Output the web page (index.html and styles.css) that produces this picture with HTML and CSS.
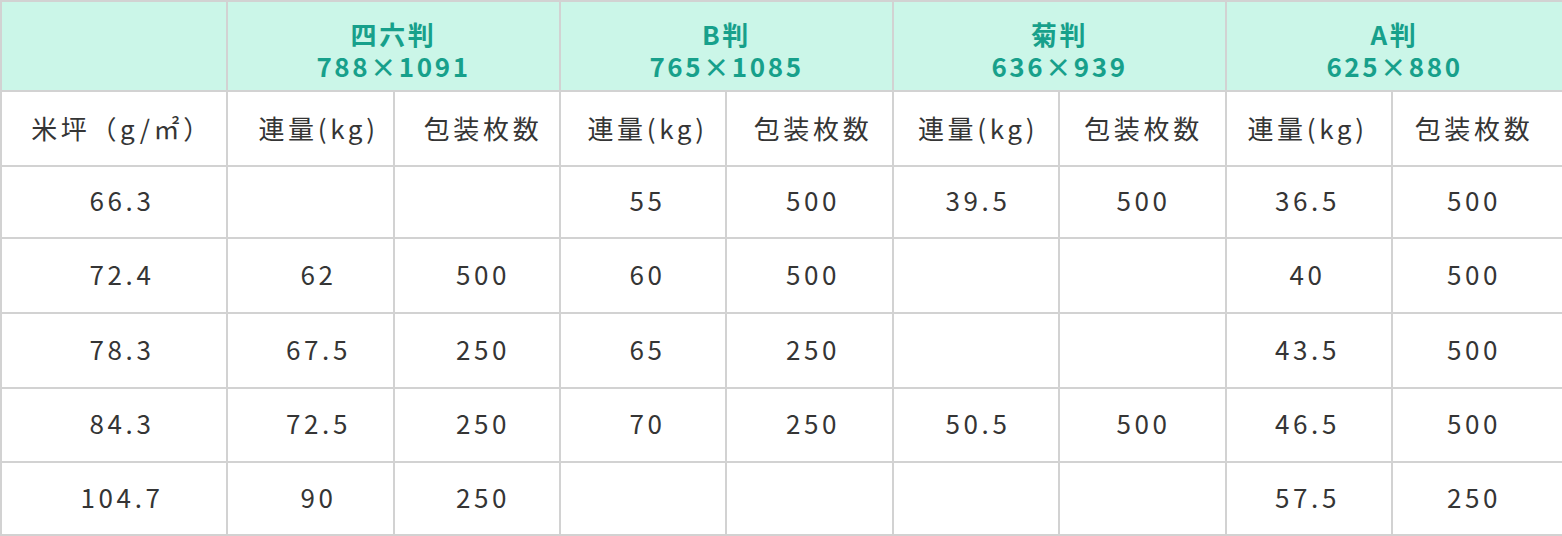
FILE: index.html
```html
<!DOCTYPE html>
<html lang="ja">
<head>
<meta charset="utf-8">
<link rel="stylesheet" href="styles.css">
</head>
<body>
<table class="paper">
  <colgroup>
    <col class="c-first">
    <col class="c-a">
    <col class="c-b">
    <col class="c-b">
    <col class="c-a">
    <col class="c-b">
    <col class="c-a">
    <col class="c-b">
    <col class="c-last">
  </colgroup>
  <thead>
    <tr class="row-head">
      <th></th>
      <th colspan="2">四六判<br>788×1091</th>
      <th colspan="2">B判<br>765×1085</th>
      <th colspan="2">菊判<br>636×939</th>
      <th colspan="2">A判<br>625×880</th>
    </tr>
    <tr class="row-sub">
      <td>米坪（g/㎡）</td>
      <td>連量(kg)</td><td>包装枚数</td>
      <td>連量(kg)</td><td>包装枚数</td>
      <td>連量(kg)</td><td>包装枚数</td>
      <td>連量(kg)</td><td>包装枚数</td>
    </tr>
  </thead>
  <tbody>
    <tr class="row-data r1">
      <td>66.3</td><td></td><td></td><td>55</td><td>500</td><td>39.5</td><td>500</td><td>36.5</td><td>500</td>
    </tr>
    <tr class="row-data r2">
      <td>72.4</td><td>62</td><td>500</td><td>60</td><td>500</td><td></td><td></td><td>40</td><td>500</td>
    </tr>
    <tr class="row-data r3">
      <td>78.3</td><td>67.5</td><td>250</td><td>65</td><td>250</td><td></td><td></td><td>43.5</td><td>500</td>
    </tr>
    <tr class="row-data r4">
      <td>84.3</td><td>72.5</td><td>250</td><td>70</td><td>250</td><td>50.5</td><td>500</td><td>46.5</td><td>500</td>
    </tr>
    <tr class="row-data r5">
      <td>104.7</td><td>90</td><td>250</td><td></td><td></td><td></td><td></td><td>57.5</td><td>250</td>
    </tr>
  </tbody>
</table>
</body>
</html>
```

FILE: styles.css
```css
html, body {
  margin: 0;
  padding: 0;
  background: #ffffff;
}

.paper {
  width: 1562px;
  border-collapse: collapse;
  table-layout: fixed;
  font-family: "Noto Sans CJK JP", "Noto Sans", sans-serif;
  color: #353535;
}

.c-first { width: 226px; }
.c-a { width: 167px; }
.c-b { width: 166px; }
.c-last { width: 171px; }

.paper th,
.paper td {
  border: 2px solid #d2d2d2;
  text-align: center;
  vertical-align: middle;
  padding: 0;
}

.row-head th {
  height: 80px;
  padding-top: 8px;
  background: #cbf6e8;
  color: #17a08b;
  font-weight: 700;
  font-size: 26px;
  line-height: 32px;
  letter-spacing: 0.1em;
}

.row-sub td,
.row-data td {
  font-size: 26px;
  letter-spacing: 0.14em;
}

.row-sub td { height: 70px; padding-bottom: 3px; }
.row-data td { padding-bottom: 5px; }
.row-data.r1 td { height: 65px; }
.row-data.r2 td { height: 68px; }
.row-data.r3 td { height: 68px; }
.row-data.r4 td { height: 67px; }
.row-data.r5 td { height: 66px; }

/* optical offsets of the text inside each column */
.row-sub td:nth-child(1) { padding-left: 16px; }
.row-data td:nth-child(1) { padding-left: 16px; }
.row-sub td:nth-child(2), .row-data td:nth-child(2) { padding-left: 16px; }
.row-sub td:nth-child(3), .row-data td:nth-child(3) { padding-left: 12px; }
.row-sub td:nth-child(4), .row-data td:nth-child(4) { padding-left: 9px; }
.row-sub td:nth-child(5), .row-data td:nth-child(5) { padding-left: 7px; }
.row-sub td:nth-child(6), .row-data td:nth-child(6) { padding-left: 4px; }
.row-sub td:nth-child(7), .row-data td:nth-child(7) { padding-left: 2px; }
.row-sub td:nth-child(8), .row-data td:nth-child(8) { padding-right: 3px; }
.row-sub td:nth-child(9), .row-data td:nth-child(9) { padding-right: 7px; }
```
